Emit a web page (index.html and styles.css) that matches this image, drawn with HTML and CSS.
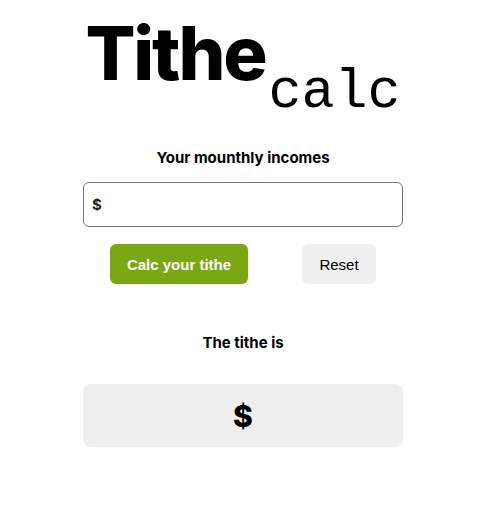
FILE: index.html
```html
<!DOCTYPE html>
<html>
<head>
<meta charset="utf-8">
<link rel="stylesheet" href="styles.css">
</head>
<body>
<main class="app">
  <h1 class="title"><span class="title-main">Tithe</span><span class="title-sub">calc</span></h1>
  <label class="label" for="income">Your mounthly incomes</label>
  <div class="field"><span class="field-cur">$</span><input id="income" class="field-input" type="text"></div>
  <div class="actions">
    <button class="btn btn-primary">Calc your tithe</button>
    <button class="btn btn-secondary">Reset</button>
  </div>
  <div class="label result-label">The tithe is</div>
  <div class="result">$</div>
</main>
</body>
</html>
```

FILE: styles.css
```css
html, body { margin: 0; padding: 0; background: #fff; }
body { font-family: Inter, "Noto Sans", sans-serif; color: #000; padding-left: 2px; }
.app {
  width: 320px;
  margin: 0 auto;
  padding-top: 16px;
  display: flex;
  flex-direction: column;
  align-items: stretch;
}
.title {
  margin: 0;
  text-align: center;
  line-height: 1;
  height: 98px;
  white-space: nowrap;
}
.title-main {
  font-family: Inter, sans-serif;
  font-weight: 800;
  font-size: 74px;
  letter-spacing: -2.2px;
}
.title-sub {
  font-family: "Liberation Mono", monospace;
  font-weight: 400;
  font-size: 55px;
  vertical-align: -27px;
  margin-left: 3px;
}
.label {
  display: block;
  text-align: center;
  font-weight: 700;
  font-size: 15px;
  line-height: 18px;
  margin-top: 35px;
}
.field {
  margin-top: 15px;
  height: 45px;
  box-sizing: border-box;
  border: 1px solid #777;
  border-radius: 6px;
  display: flex;
  align-items: center;
  padding-left: 8px;
}
.field-cur {
  font-weight: 700;
  font-size: 15px;
  color: #222;
}
.field-input {
  flex: 1;
  border: none;
  outline: none;
  background: transparent;
  font-size: 15px;
  height: 100%;
}
.actions {
  margin-top: 17px;
  display: flex;
  justify-content: center;
  gap: 54px;
}
.btn {
  font-family: "Liberation Sans", Arial, sans-serif;
  font-size: 15px;
  height: 40px;
  border: none;
  border-radius: 6px;
  cursor: pointer;
}
.btn-primary {
  width: 138px;
  background: #7aa812;
  color: #fff;
  font-weight: 700;
}
.btn-secondary {
  width: 74px;
  background: #efefef;
  color: #000;
}
.result-label { margin-top: 50px; }
.result {
  margin-top: 32px;
  height: 63px;
  background: #efefef;
  border-radius: 8px;
  display: flex;
  align-items: center;
  justify-content: center;
  font-weight: 800;
  font-size: 30px;
}
```
